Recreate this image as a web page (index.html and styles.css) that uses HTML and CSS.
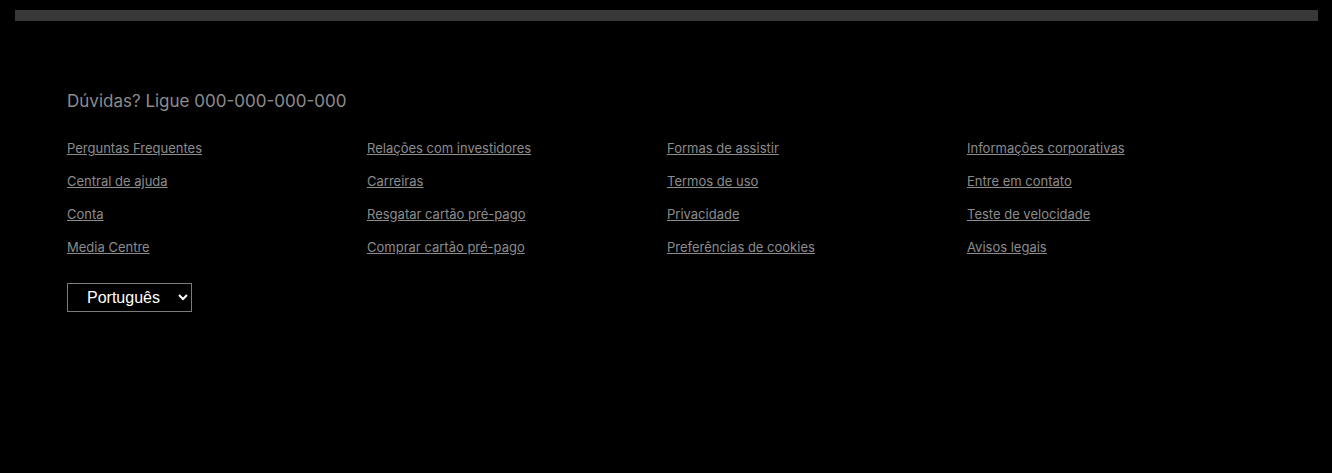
FILE: index.html
```html
<!DOCTYPE html>
<html lang="pt">
<head>
<meta charset="utf-8">
<title>Footer</title>
<link rel="stylesheet" href="styles.css">
</head>
<body>
<div class="divider"></div>
<footer class="footer">
  <p class="phone">Dúvidas? Ligue 000-000-000-000</p>
  <ul class="links">
    <li><a href="#">Perguntas Frequentes</a></li>
    <li><a href="#">Relações com investidores</a></li>
    <li><a href="#">Formas de assistir</a></li>
    <li><a href="#">Informações corporativas</a></li>
    <li><a href="#">Central de ajuda</a></li>
    <li><a href="#">Carreiras</a></li>
    <li><a href="#">Termos de uso</a></li>
    <li><a href="#">Entre em contato</a></li>
    <li><a href="#">Conta</a></li>
    <li><a href="#">Resgatar cartão pré-pago</a></li>
    <li><a href="#">Privacidade</a></li>
    <li><a href="#">Teste de velocidade</a></li>
    <li><a href="#">Media Centre</a></li>
    <li><a href="#">Comprar cartão pré-pago</a></li>
    <li><a href="#">Preferências de cookies</a></li>
    <li><a href="#">Avisos legais</a></li>
  </ul>
  <select class="lang">
    <option>Português</option>
    <option>English</option>
  </select>
</footer>
</body>
</html>
```
FILE: styles.css
```css
html, body {
  margin: 0;
  padding: 0;
  background: #000;
}
body {
  padding: 10px 14px 0 15px;
  font-family: Inter, "Liberation Sans", Arial, sans-serif;
}
.divider {
  height: 11px;
  background: #383838;
}
.footer {
  padding: 0 52px;
  color: #8c8c8c;
}
.phone {
  margin: 0;
  padding-top: 70px;
  font-size: 17px;
  line-height: 20px;
}
.links {
  list-style: none;
  margin: 0;
  padding: 0;
  padding-top: 29px;
  display: grid;
  grid-template-columns: repeat(4, 300px);
  row-gap: 17px;
}
.links li {
  font-size: 13px;
  line-height: 16px;
}
.links a {
  color: #8c8c8c;
  text-decoration: underline;
}
.lang {
  margin-top: 28px;
  width: 125px;
  height: 29px;
  background: #000;
  color: #fff;
  border: 1px solid #7a7a7a;
  border-radius: 0;
  font-family: "Liberation Sans", Arial, sans-serif;
  font-size: 16px;
  padding: 0 0 0 15px;
}
```
